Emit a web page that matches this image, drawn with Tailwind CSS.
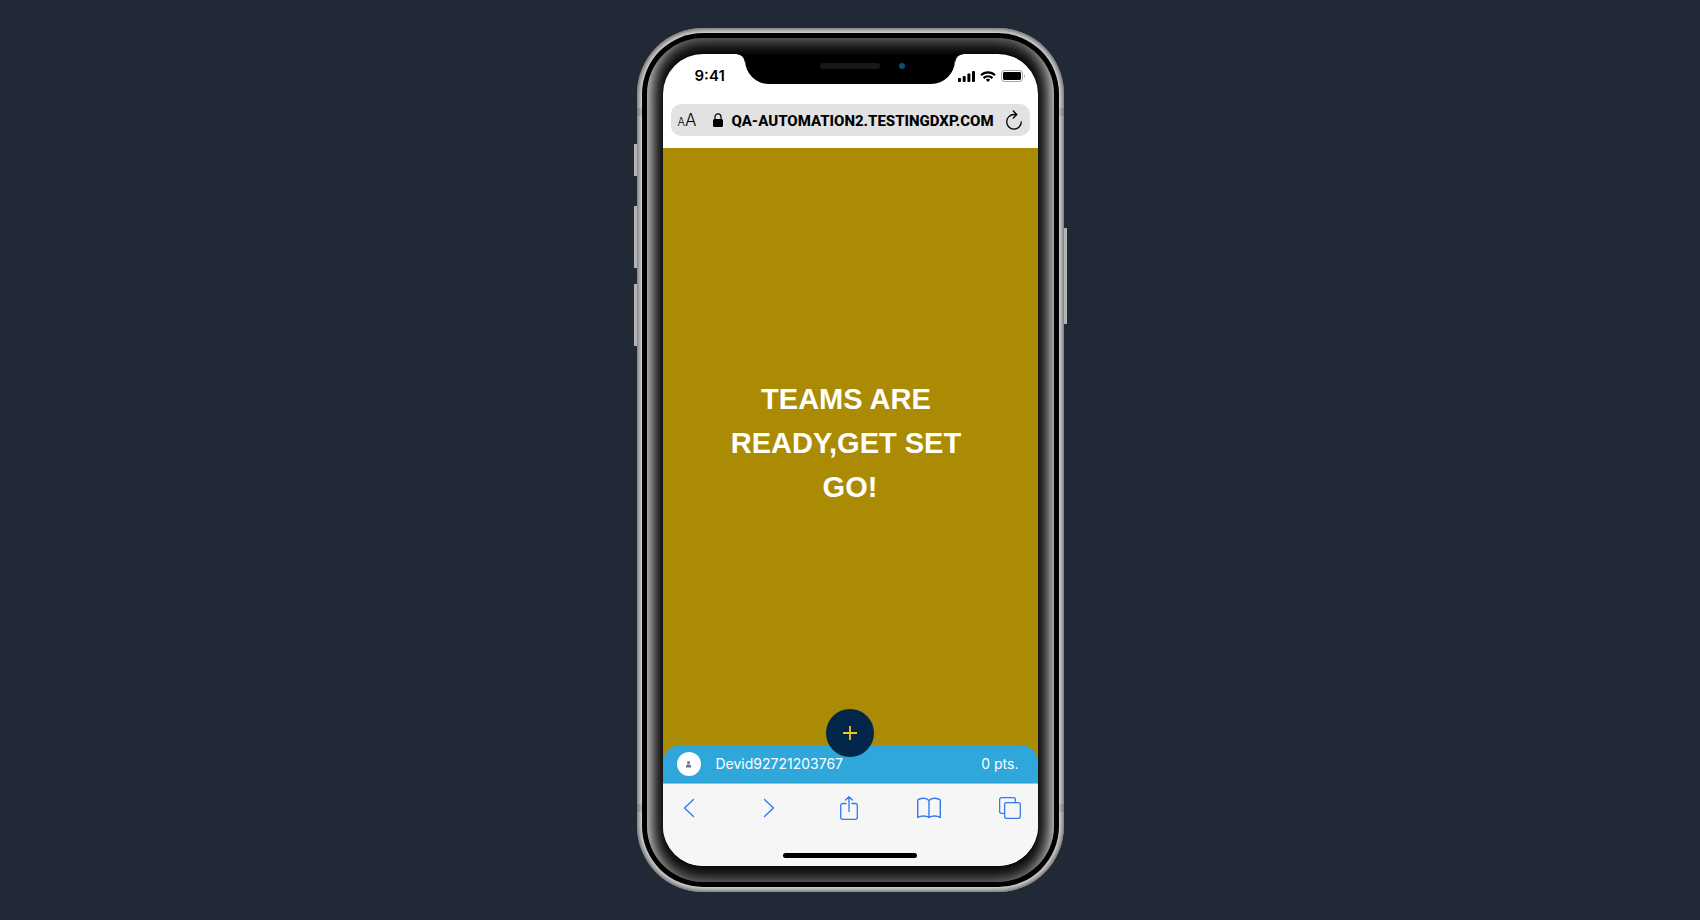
<!DOCTYPE html>
<html lang="en">
<head>
<meta charset="utf-8">
<meta name="viewport" content="width=device-width, initial-scale=1">
<title>Phone preview</title>
<script src="https://cdn.jsdelivr.net/npm/@tailwindcss/browser@4"></script>
</head>
<body class="min-h-screen bg-[#222936] font-['Inter',sans-serif]">
<main class="flex min-h-screen items-center justify-center">
  <div class="relative isolate rounded-[66px] bg-[#fdfdfd] p-[26px] shadow-[inset_0_0_11px_0_#000]">
    <!-- Antenna bands -->
    <div class="absolute inset-x-0 top-20 h-2 bg-black/10"></div>
    <div class="absolute inset-x-0 bottom-20 h-2 bg-black/10"></div>
    <!-- Side buttons -->
    <div class="absolute -left-[3px] top-[116px] h-8 w-[3px] bg-[#b5b5b5]"></div>
    <div class="absolute -left-[3px] top-[178px] h-[62px] w-[3px] bg-[#b5b5b5]"></div>
    <div class="absolute -left-[3px] top-[256px] h-[62px] w-[3px] bg-[#b5b5b5]"></div>
    <div class="absolute -right-[3px] top-[200px] h-24 w-[3px] bg-[#b5b5b5]"></div>
    <!-- Bezel with its inner sheen -->
    <div class="absolute inset-[5px] rounded-[61px] bg-black"></div>
    <div class="absolute inset-[10px] overflow-hidden rounded-[56px] shadow-[inset_0_0_20px_0_rgba(255,255,255,0.66)]">
      <div class="absolute -top-[8%] h-[116%] w-full rounded-[200px/112px] shadow-[inset_0_0_20px_0_#fff]"></div>
    </div>
    <!-- Notch -->
    <div class="absolute left-1/2 top-[26px] z-10 h-[30px] w-[210px] -translate-x-1/2 rounded-b-3xl bg-black">
      <div class="absolute -left-2 top-0 size-2 bg-[radial-gradient(circle_at_0_100%,transparent_7px,#000_8px)]"></div>
      <div class="absolute -right-2 top-0 size-2 bg-[radial-gradient(circle_at_100%_100%,transparent_7px,#000_8px)]"></div>
      <div class="absolute left-1/2 top-[9px] h-1.5 w-15 -translate-x-1/2 rounded-full bg-[#171818]"></div>
      <div class="absolute left-[154px] top-[9px] size-1.5 rounded-full bg-[#0d4d71]"></div>
    </div>

    <div class="relative flex h-[812px] w-[375px] flex-col overflow-hidden rounded-[40px] bg-white">
      <div class="flex h-11 shrink-0 items-center justify-between pl-8 pr-[13px]">
        <time class="text-[15px] font-semibold">9:41</time>
        <div class="flex items-center gap-[5px]">
          <svg class="h-[11px] w-[17px]" viewBox="0 0 17 11" aria-label="Signal"><rect y="7" width="3" height="4" rx="1"/><rect x="4.7" y="5" width="3" height="6" rx="1"/><rect x="9.4" y="2.5" width="3" height="8.5" rx="1"/><rect x="14" width="3" height="11" rx="1"/></svg>
          <svg class="h-[11px] w-4" viewBox="0 0 16 11" aria-label="Wi-Fi"><g fill="none" stroke="#000" stroke-width="2.200"><path d="M1 4.2a10 10 0 0 1 14 0"/><path d="M3.500 7.100a6.400 6.400 0 0 1 9 0"/></g><path d="M5.800 8.800a3.200 3.200 0 0 1 4.400 0L8 11z"/></svg>
          <svg class="h-3 w-6" viewBox="0 0 24 12" aria-label="Battery"><rect x=".5" y=".5" width="21" height="11" rx="2.700" fill="none" stroke="#000" stroke-opacity=".35"/><rect x="2" y="2" width="18" height="8" rx="1.400"/><path d="M23 4v4c1-.4 1-3.600 0-4z" opacity=".4"/></svg>
        </div>
      </div>

      <div class="flex h-[50px] shrink-0 px-2 pb-3 pt-1.5">
        <div class="flex flex-1 items-center rounded-[10px] bg-[#e2e2e2] pl-[7px] pr-2">
          <button type="button" class="flex items-baseline font-light leading-none" aria-label="Text size"><span class="text-[11px]">A</span><span class="text-[17px]">A</span></button>
          <svg class="ml-[17px] mr-2 h-[14px] w-[10px]" viewBox="0 0 10 14" aria-hidden="true"><rect y="6" width="10" height="8" rx="1.500"/><path d="M2 7V3.800a3 3 0 0 1 6 0V7" fill="none" stroke="#000" stroke-width="1.200"/></svg>
          <span class="whitespace-nowrap pt-[3px] font-['Roboto',sans-serif] text-[15px] font-extrabold">QA-AUTOMATION2.TESTINGDXP.COM</span>
          <button type="button" class="ml-auto" aria-label="Reload"><svg class="h-5 w-4" viewBox="0 0 16 20" fill="none" stroke="#000" stroke-width="1.300" stroke-linecap="round" stroke-linejoin="round"><path d="M9.500 4.500H8a7.300 7.300 0 1 0 7.300 7.300M7.300 1l3.500 3.500L7.300 8"/></svg></button>
        </div>
      </div>

      <section class="flex flex-1 items-center justify-center bg-[#ab8b04] px-14 pb-2">
        <h1 class="whitespace-break-spaces text-center font-['Liberation_Sans',sans-serif] text-[29px] font-bold leading-[44px] text-white">TEAMS ARE READY,GET SET GO!</h1>
      </section>

      <div class="relative bg-[#ab8b04]">
        <div class="flex h-[38px] items-center rounded-t-[18px] bg-[#2fa7da] pl-[14px] pr-[19px] text-sm text-white">
          <span class="mr-[15px] flex size-6 items-center justify-center rounded-full bg-white"><svg class="h-[7px] w-[5px]" viewBox="0 0 5 7" fill="#65748b" aria-hidden="true"><circle cx="2.500" cy="1.500" r="1.500"/><path d="M0 6.500V5a1.500 1.500 0 0 1 1.500-1.500h2A1.500 1.500 0 0 1 5 5v1.500z"/></svg></span>
          <span>Devid92721203767</span>
          <span class="ml-auto">0 pts.</span>
        </div>
        <button type="button" aria-label="Add" class="absolute -top-9 left-1/2 flex size-12 -translate-x-1/2 items-center justify-center rounded-full bg-[#02274b]"><svg class="size-[14px]" viewBox="0 0 14 14" stroke="#f2c811" stroke-width="1.800"><path d="M7 0v14M0 7h14"/></svg></button>
      </div>

      <nav class="flex h-[83px] shrink-0 flex-col items-center justify-between border-t border-[#b8b8b8] bg-[#f6f6f6] pb-2 pt-3" aria-label="Browser">
        <div class="flex w-full items-center justify-between pl-[14px] pr-4 text-[#2f7bf0]">
          <button type="button" class="flex w-6 justify-center" aria-label="Back"><svg class="h-6 w-3" viewBox="0 0 12 24" fill="none" stroke="currentColor" stroke-width="1.400" stroke-linecap="round" stroke-linejoin="round"><path d="M10.500 3.500 1.500 12l9 8.500"/></svg></button>
          <button type="button" class="flex w-6 justify-center" aria-label="Forward"><svg class="h-6 w-3" viewBox="0 0 12 24" fill="none" stroke="currentColor" stroke-width="1.400" stroke-linecap="round" stroke-linejoin="round"><path d="M1.500 3.500l9 8.500-9 8.500"/></svg></button>
          <button type="button" class="flex w-6 justify-center" aria-label="Share"><svg class="h-6 w-[18px]" viewBox="0 0 18 24" fill="none" stroke="currentColor" stroke-width="1.300" stroke-linecap="round" stroke-linejoin="round"><path d="M6 7.500H2.700a2 2 0 0 0-2 2v11.800a2 2 0 0 0 2 2h12.600a2 2 0 0 0 2-2V9.500a2 2 0 0 0-2-2H12M9 15.500V.700M5.500 4 9 .700 12.500 4"/></svg></button>
          <button type="button" class="flex w-6 justify-center" aria-label="Bookmarks"><svg class="h-6 w-6" viewBox="0 0 24 24" fill="none" stroke="currentColor" stroke-width="1.400" stroke-linejoin="round"><path d="M12 4.500v17M12 4.500C9.500 1.500 3.500 1.500.700 4v17.500c3-2 8.800-2 11.300 0 2.500-2 8.300-2 11.300 0V4C20.500 1.500 14.500 1.500 12 4.500z"/></svg></button>
          <button type="button" class="flex w-6 justify-center" aria-label="Tabs"><svg class="h-6 w-[22px]" viewBox="0 0 22 24" fill="none" stroke="currentColor" stroke-width="1.300"><rect x="5.600" y="6.600" width="15.700" height="15.700" rx="2"/><path d="M5.600 17.400h-3a2 2 0 0 1-2-2V3.600a2 2 0 0 1 2-2h11.800a2 2 0 0 1 2 2v3"/></svg></button>
        </div>
        <div class="h-[5px] w-[134px] rounded-full bg-black"></div>
      </nav>
    </div>
  </div>
</main>
</body>
</html>
